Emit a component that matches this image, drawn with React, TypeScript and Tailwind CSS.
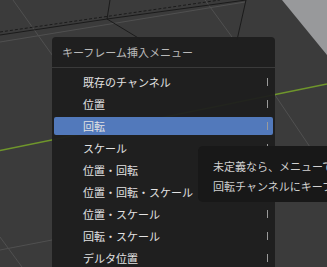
const font = { fontFamily: '"Noto Sans CJK JP", "Noto Sans", sans-serif' };

const items = [
  "既存のチャンネル",
  "位置",
  "回転",
  "スケール",
  "位置・回転",
  "位置・回転・スケール",
  "位置・スケール",
  "回転・スケール",
  "デルタ位置",
];

// viewport backdrop: grid, edges and the Y axis
function Viewport() {
  return (
    <svg className="absolute inset-0" width={327} height={267} viewBox="0 0 327 267">
      <polygon points="282,0 327,0 327,55" fill="#98999b" />
      <g stroke="#505050" strokeWidth={1} fill="none">
        <line x1={0} y1={42} x2={245} y2={2} />
        <line x1={13} y1={0} x2={60} y2={66} />
        <line x1={205} y1={0} x2={232} y2={37} />
        <line x1={275} y1={95} x2={312} y2={150} />
        <line x1={0} y1={250} x2={52} y2={240} />
        <line x1={0} y1={237} x2={22} y2={267} />
      </g>
      <g stroke="#1b1b1b" strokeWidth={1} fill="none">
        <line x1={0} y1={35} x2={107} y2={19} />
        <line x1={107} y1={19} x2={246} y2={0} />
        <line x1={0} y1={32} x2={220} y2={0} strokeDasharray="3 2" />
        <line x1={107} y1={19} x2={110} y2={0} />
        <line x1={107} y1={19} x2={140} y2={39} />
        <line x1={246} y1={0} x2={237} y2={40} />
      </g>
      <line x1={0} y1={150.5} x2={327} y2={84} stroke="#6f962b" strokeWidth={1.6} />
    </svg>
  );
}

export default function App() {
  return (
    <div className="relative h-[267px] w-[327px] overflow-hidden bg-[#3b3b3b]" style={font}>
      <Viewport />

      <div className="absolute left-[52px] top-[37px] w-[223px] rounded-[4px] bg-[#1e1e1e]/95 pb-2">
        <div className="flex h-[30px] items-center px-[10px] text-[11px] text-[#b9b9b9]">
          キーフレーム挿入メニュー
        </div>
        <div className="h-px bg-[#3a3a3a]" />
        <div className="pt-[3px]">
          {items.map((label) => {
            const active = label === "回転";
            return (
              <div key={label} className="h-[22px] px-[2px] py-[2px]">
                <div
                  className={
                    "flex h-[18px] items-center rounded-[2px] pl-[29px] pr-[5px] text-[11px] text-[#e2e2e2] " +
                    (active ? "bg-[#5279bb]" : "")
                  }
                >
                  <span className="flex-1 whitespace-nowrap">{label}</span>
                  <span className="h-[8px] w-[1.5px] bg-[#9a9a9a]" />
                </div>
              </div>
            );
          })}
        </div>
      </div>

      <div className="absolute left-[198px] top-[146px] w-[220px] rounded-[5px] bg-[#181818] pb-[6px] pl-[15px] pt-[10px] text-[11px] leading-[20px] text-[#d0d0d0]">
        <div className="whitespace-nowrap">未定義なら、メニューでキーフレームを挿入</div>
        <div className="whitespace-nowrap">回転チャンネルにキーフレームを挿入</div>
      </div>
    </div>
  );
}
